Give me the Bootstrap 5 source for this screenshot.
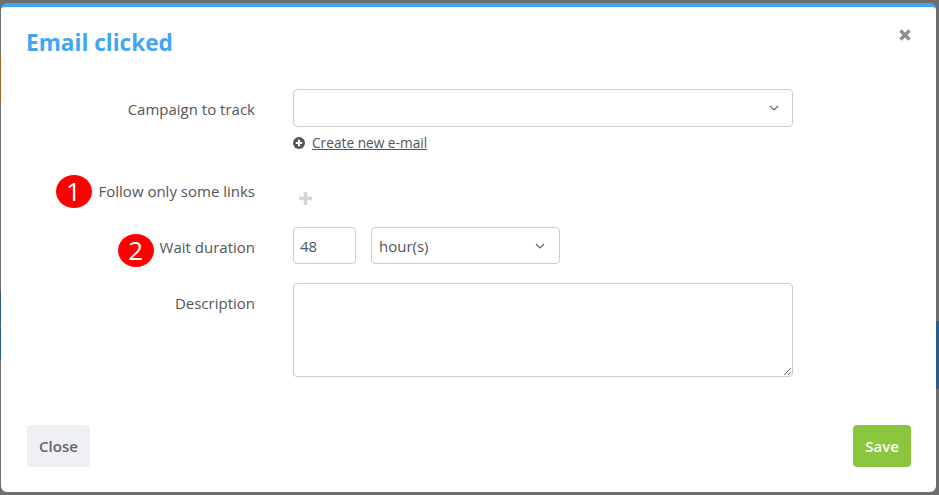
<!DOCTYPE html>
<html lang="en"><head><meta charset="utf-8">
<title>Email clicked</title>
<link href="https://cdn.jsdelivr.net/npm/bootstrap@5.3.0/dist/css/bootstrap.min.css" rel="stylesheet">
<style>
html,body{height:100%;margin:0}
body{font-family:"Open Sans","Liberation Sans",sans-serif;font-size:15px;color:#555;overflow:hidden;
background-color:#6e6e6e;background-repeat:no-repeat;
background-image:linear-gradient(#9a6a20,#9a6a20),linear-gradient(#2a5f8a,#2a5f8a),linear-gradient(#2a5f8a,#2a5f8a),linear-gradient(#2a5f8a,#2a5f8a);
background-size:1px 48px,1px 34px,1px 32px,3px 68px;
background-position:0 53px,0 291px,0 327px,100% 321px}
.stage{padding:3px 3px 3px 1px;height:495px}
.dlg{height:489px;background:#fff;border-top:4px solid #42a5f0;border-radius:6px;display:flex;flex-direction:column;padding:0 25px 0 26px}
.dlg-top{padding-top:21px;height:74px;flex:none}
.dlg-title{font-size:22.6px;font-weight:700;color:#42a5f0;line-height:30px;margin:0;margin-left:-1px}
.close-x{color:#8e8e8e;width:12px;height:12px;margin-top:1px;background:none;border:0;padding:0;display:block}
.lbl{width:228px;flex:none;text-align:right;color:#555;line-height:20px;display:flex;justify-content:flex-end;align-items:center;gap:7px;min-height:36px}
.fld{margin-left:38px;width:500px}
.inp{display:block;border:1px solid #ccc;border-radius:4px;background:#fff;color:#555;font-size:15px;line-height:20px;outline:0}
.sel{height:38px;appearance:none;background-image:url("data:image/svg+xml,%3csvg xmlns='http://www.w3.org/2000/svg' viewBox='0 0 10 6'%3e%3cpath fill='none' stroke='%23666' stroke-width='1.2' d='M1 1l4 4 4-4'/%3e%3c/svg%3e");background-repeat:no-repeat;background-size:10px 6px;background-position:right 13px center;padding:0 6px}
.num{width:63px;height:37px;padding:0 6px}
.unit{width:189px;height:37px;margin-left:15px;padding-left:7px;background-position:right 14px center}
.ta{width:500px;height:94px;resize:both}
.pin{width:36px;height:33px;border-radius:50%;background:#f00;color:#fff;font-size:26px;font-weight:400;line-height:33px;text-align:center;flex:none}
.pin-low{margin-top:6px}
.lbl-low{padding-top:3px;gap:6px}
.lnk{color:#555;text-decoration:underline;font-size:13.7px;line-height:18px}
.act{font-size:15px;font-weight:600;border-radius:4px;height:42px;padding:0;border:0}
.act-close{background:#eef0f3;color:#666;width:63px}
.act-save{background:#8cc63f;color:#fff;width:58px}
.r1{height:38px;margin-top:8px}
</style></head><body>
<div class="stage"><div class="dlg">
 <div class="dlg-top d-flex justify-content-between align-items-start">
  <h5 class="dlg-title">Email clicked</h5>
  <button class="close-x" aria-label="Close"><svg width="12" height="12" viewBox="0 0 12 12" style="display:block"><path fill="none" stroke="currentColor" stroke-width="3.4" d="M1.5 1.5l9 9M10.5 1.5l-9 9"/></svg></button>
 </div>
 <div class="d-flex align-items-center r1">
  <div class="lbl" style="padding-top:2px">Campaign to track</div>
  <div class="fld"><select class="inp sel w-100"><option></option></select></div>
 </div>
 <div class="d-flex" style="height:24px">
  <div class="lbl"></div>
  <div class="fld d-flex align-items-center" style="height:18px;margin-top:7px;gap:7px">
   <svg width="12" height="12" viewBox="0 0 12 12"><circle cx="6" cy="6" r="6" fill="#555"/><path stroke="#fff" stroke-width="2" d="M2.8 6h6.4M6 2.8v6.4"/></svg>
   <a class="lnk" href="#">Create new e-mail</a>
  </div>
 </div>
 <div class="d-flex align-items-start" style="margin-top:22px;height:54px">
  <div class="lbl">
   <span class="pin">1</span><span>Follow only some links</span>
  </div>
  <div class="fld" style="padding-left:6px;padding-top:19px"><svg width="13" height="13" viewBox="0 0 13 13" style="display:block"><path fill="none" stroke="#d6d6d6" stroke-width="3.6" d="M0 6.5h13M6.5 0v13"/></svg></div>
 </div>
 <div class="d-flex align-items-center" style="height:37px">
  <div class="lbl lbl-low"><span class="pin pin-low">2</span><span>Wait duration</span></div>
  <div class="fld d-flex">
   <input class="inp num" value="48">
   <select class="inp sel unit"><option>hour(s)</option></select>
  </div>
 </div>
 <div class="d-flex align-items-start" style="margin-top:19px">
  <div class="lbl" style="padding-top:10px;min-height:0">Description</div>
  <div class="fld"><textarea class="inp ta"></textarea></div>
 </div>
 <div class="d-flex justify-content-between" style="margin-top:48px">
  <button class="act act-close">Close</button>
  <button class="act act-save">Save</button>
 </div>
</div></div>
<script src="https://cdn.jsdelivr.net/npm/bootstrap@5.3.0/dist/js/bootstrap.bundle.min.js"></script>
</body></html>
